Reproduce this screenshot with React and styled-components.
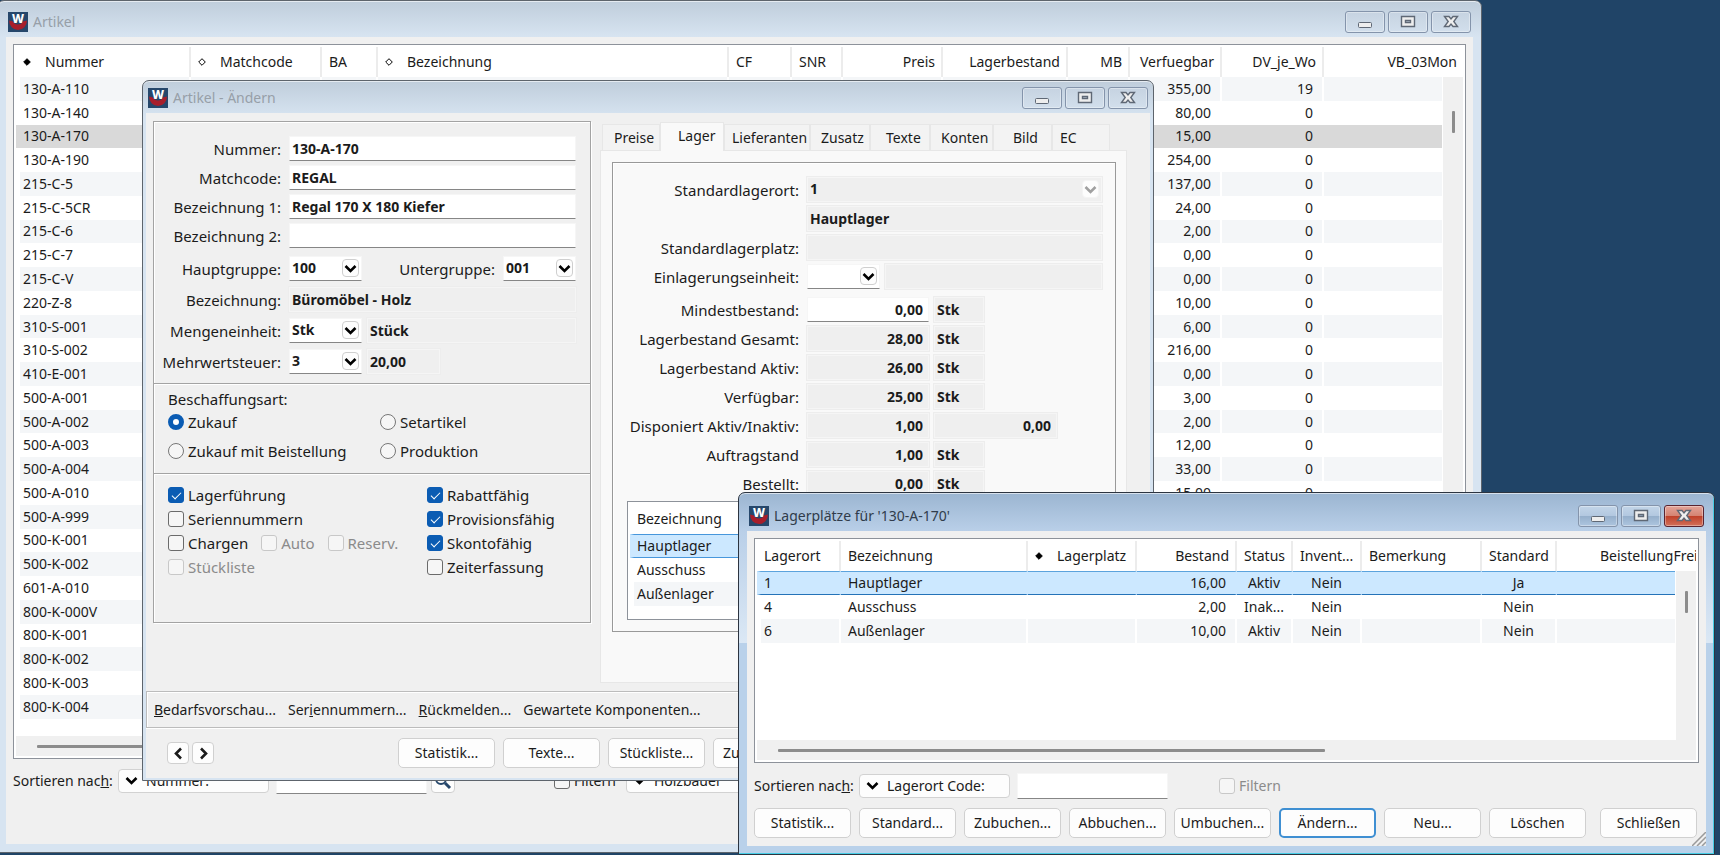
import React from 'react';
import styled, { createGlobalStyle, css } from 'styled-components';

const GlobalStyle = createGlobalStyle`
	* {
		box-sizing: border-box;
	}

	body {
		margin: 0;
		background-color: #204467;
		font-family: 'Noto Sans', 'Open Sans', sans-serif;
		font-size: 14px;
		line-height: 20px;
		color: #1b1b1b;
	}

	button,
	input,
	select {
		margin: 0;
		font-family: inherit;
		font-size: inherit;
		line-height: inherit;
		color: inherit;
	}
`;

const Desktop = styled.div`
	position: relative;
	min-height: 100vh;
	overflow: hidden;
`;

/* window frame */

const Window = styled.section`
	position: absolute;
	display: flex;
	flex-direction: column;
	padding: 0 ${({ $frame }) => $frame}px ${({ $bottom }) => $bottom}px;
	border: 1px solid ${({ $active }) => ($active ? '#2c3440' : '#5d646c')};
	border-radius: 7px 7px 0 0;
	background-color: ${({ $active }) => ($active ? '#b9d1ea' : '#d7e4f1')};
	background-image: ${({ $active }) =>
		$active
			? 'linear-gradient(#9bb5d1 0, #b9cfe8 38px, #dbe8f5 150px, #b9d1ea 150px)'
			: 'linear-gradient(#bfcddb 0, #d7e4f1 36px)'};
	box-shadow: inset 0 1px 0 rgba(255, 255, 255, 0.6)
		${({ $active }) => $active && ', inset -1px -1px 0 #45cde6'};
`;

const ArticleListWindow = styled(Window)`
	top: 0;
	bottom: 2px;
	left: -3px;
	right: 238px;
`;

const ArticleWindow = styled(Window)`
	top: 80px;
	left: 142px;
	right: 566px;
`;

const StorageWindow = styled(Window)`
	bottom: 0;
	left: 738px;
	right: 5px;
	height: 363px;
`;

const TitleBar = styled.header`
	display: flex;
	align-items: flex-end;
	height: ${({ $height }) => $height}px;
	flex-shrink: 0;
	padding: 0 2px 4px;
`;

const TitleText = styled.h1`
	flex: 1;
	margin: 0 0 0 5px;
	font-size: 14px;
	font-weight: 400;
	line-height: 22px;
	color: ${({ $active }) => ($active ? '#303c4b' : '#979fa8')};
`;

const Logo = styled.svg`
	width: 20px;
	height: 20px;
	margin-bottom: 1px;
	overflow: visible;
`;

const LogoLetter = styled.text`
	font: 800 12px 'Noto Sans', sans-serif;
	fill: #fff;
`;

const WindowButtons = styled.div`
	display: flex;
	gap: 3px;
`;

const WindowButton = styled.button`
	display: flex;
	align-items: center;
	justify-content: center;
	width: 40px;
	height: 22px;
	padding: 0;
	border: 1px solid ${({ $danger }) => ($danger ? '#5a2430' : '#8494ab')};
	border-radius: 3px;
	background: ${({ $danger, $active }) => {
		if ($danger) return 'linear-gradient(#e3a398, #d58473 48%, #bf3f28 50%, #d2705a)';
		if ($active) return 'linear-gradient(#c2d5e8, #b3c8e0 48%, #95afcb 50%, #adc5df)';
		return 'linear-gradient(#c6d3e1, #d2dfec)';
	}};
	box-shadow: inset 0 0 0 1px rgba(255, 255, 255, 0.35);
`;

const Content = styled.div`
	display: flex;
	flex: 1;
	flex-direction: column;
	min-height: 0;
	padding: 7px 7px 0;
	background-color: #f0f0f0;
`;

/* list view */

const ListFrame = styled.div`
	position: relative;
	display: flex;
	flex: 1;
	flex-direction: column;
	min-height: 0;
	padding: 2px;
	border: 1px solid #8d929a;
	background-color: #fff;
`;

const ListBody = styled.div`
	flex: 1;
	min-height: 0;
	overflow: hidden;
`;

const HeadCell = styled.th`
	height: 30px;
	padding: 0 6px 0 ${({ $indent }) => $indent || 7}px;
	border-right: 2px solid #ececec;
	font-weight: 400;
	text-align: ${({ $align }) => $align || 'left'};
	white-space: nowrap;
	overflow: hidden;

	&:last-child {
		border-right: 0;
	}
`;

const SortMark = styled.svg`
	width: 8px;
	height: 8px;
	margin-right: 14px;
	vertical-align: 1px;
`;

const Cell = styled.td`
	padding: 0 9px 0 7px;
	border-right: 2px solid #fff;
	text-align: ${({ $align }) => $align || 'left'};
	white-space: nowrap;
	overflow: hidden;

	${({ $align }) => $align === 'center' && 'padding: 0;'}

	&:first-child {
		padding-left: 3px;
		border-left: 4px solid #fff;
	}
`;

const Table = styled.table`
	width: 100%;
	height: ${({ $height }) => ($height ? `${$height}px` : 'auto')};
	table-layout: fixed;
	border-collapse: separate;
	border-spacing: 0;
	line-height: 20px;

	${Cell} {
		height: ${({ $height }) => ($height ? 23 : 24)}px;
	}
`;

const Row = styled.tr`
	background-color: ${({ $striped }) => ($striped ? '#f4f6f8' : '#fff')};

	${({ $mark }) =>
		$mark === 'inactive' &&
		css`
			background-color: #d9d9d9;

			${Cell} {
				border-color: #d9d9d9;
			}
		`}

	${({ $mark }) =>
		$mark === 'active' &&
		css`
			background-color: #cce8ff;

			${Cell} {
				border-color: #cce8ff;
				border-top: 1px solid #5ba3dd;
				border-bottom: 1px solid #2473b8;
			}
		`}
`;

const VerticalTrack = styled.div`
	position: absolute;
	top: 32px;
	right: 2px;
	bottom: 22px;
	display: flex;
	justify-content: center;
	width: 21px;
	padding-top: ${({ $offset }) => $offset}px;
	border-left: 1px solid #fff;
	background-color: #f0f0f0;
`;

const VerticalThumb = styled.div`
	width: 3px;
	height: 22px;
	border-radius: 1px;
	background-color: #8c8c8c;
`;

const HorizontalTrack = styled.div`
	display: flex;
	align-items: center;
	height: 20px;
	flex-shrink: 0;
	padding: 0 21px;
	background-color: #f0f0f0;
`;

const HorizontalThumb = styled.div`
	width: ${({ $width }) => $width};
	height: 3px;
	border-radius: 1px;
	background-color: #8c8c8c;
`;

/* form controls */

const field = css`
	width: 100%;
	height: 25px;
	padding: 0 5px 1px 2px;
	border: 1px solid #f6f6f6;
	border-radius: 0;
	outline: none;
	font-size: 14px;
	font-weight: 700;
	text-align: ${({ $align }) => $align || 'left'};
`;

const TextInput = styled.input`
	${field}
	border-bottom-color: #868686;
	background-color: #fff;
`;

const ReadOnlyInput = styled.input`
	${field}
	border-color: #f5f5f5;
	background-color: #efefef;
	box-shadow: 0 0 0 1px #ededed;
`;

const SelectWrap = styled.span`
	position: relative;
	display: block;
	width: 100%;
`;

const SelectInput = styled.select`
	${field}
	display: block;
	appearance: none;
	border-bottom-color: ${({ disabled }) => (disabled ? '#f5f5f5' : '#868686')};
	background-color: ${({ disabled }) => (disabled ? '#efefef' : '#fff')};
	box-shadow: ${({ disabled }) => (disabled ? '0 0 0 1px #ededed' : 'none')};
	opacity: 1;
`;

const SelectArrow = styled.span`
	position: absolute;
	top: 3px;
	right: 3px;
	display: flex;
	align-items: center;
	justify-content: center;
	width: 17px;
	height: 18px;
	border: 1px solid ${({ $disabled }) => ($disabled ? '#f4f4f4' : '#cfcfcf')};
	border-radius: 4px;
	background-color: #fdfdfd;
	color: ${({ $disabled }) => ($disabled ? '#a0a0a0' : '#000')};
	pointer-events: none;
`;

const SortSelectWrap = styled.span`
	position: relative;
	width: 151px;
`;

const SortSelectInput = styled.select`
	display: block;
	width: 100%;
	height: 24px;
	padding: 0 4px 0 27px;
	border: 1px solid #d2d2d2;
	border-radius: 4px;
	appearance: none;
	background-color: #fdfdfd;
`;

const SortArrow = styled.span`
	position: absolute;
	top: 0;
	left: 7px;
	display: flex;
	align-items: center;
	height: 24px;
	color: #000;
	pointer-events: none;
`;

const Button = styled.button`
	width: 97px;
	height: 30px;
	flex-shrink: 0;
	padding: 0;
	border: ${({ $primary }) => ($primary ? '2px solid #3f8fd2' : '1px solid #d0d0d0')};
	border-radius: 5px;
	background-color: #fdfdfd;
	white-space: nowrap;
`;

const StepButton = styled.button`
	display: flex;
	align-items: center;
	justify-content: center;
	width: 22px;
	height: 22px;
	padding: 0;
	border: 1px solid #d0d0d0;
	border-radius: 4px;
	background-color: #fdfdfd;
`;

const CheckLabel = styled.label`
	display: flex;
	align-items: center;
	gap: 4px;
	height: 24px;
	font-size: ${({ $small }) => ($small ? 14 : 15)}px;
	color: ${({ $disabled }) => ($disabled ? '#8b8b8b' : 'inherit')};
	white-space: nowrap;
`;

const CheckBox = styled.input`
	display: flex;
	justify-content: center;
	width: 16px;
	height: 16px;
	appearance: none;
	border: 1px solid #6b6b6b;
	border-radius: 3px;
	background-color: #f6f6f6;

	&:checked {
		border-color: #0b5cb3;
		background-color: #0b5cb3;
	}

	&:checked::after {
		content: '';
		width: 8px;
		height: 4px;
		margin-top: 4px;
		border-bottom: 1px solid #fff;
		border-left: 1px solid #fff;
		transform: rotate(-45deg);
	}

	&:disabled {
		border-color: #c8c8c8;
	}
`;

const Radio = styled.input`
	width: 16px;
	height: 16px;
	appearance: none;
	border: 1px solid #777;
	border-radius: 50%;
	background-color: #f6f6f6;

	&:checked {
		border: 5px solid #0b5cb3;
		background-color: #fff;
	}
`;

/* footers */

const ListFooter = styled.footer`
	display: flex;
	align-items: center;
	height: ${({ $height }) => $height}px;
	flex-shrink: 0;
	padding-bottom: ${({ $bottom }) => $bottom}px;
`;

const SortLabel = styled.label`
	width: 105px;
	flex-shrink: 0;
`;

const SearchInput = styled(TextInput)`
	width: 151px;
	height: 26px;
	margin-left: 7px;
	font-weight: 400;
`;

const SearchButton = styled(StepButton)`
	width: 24px;
	height: 24px;
	margin: 0 99px 0 4px;
`;

const FilterSlot = styled.div`
	margin: 0 10px 0 ${({ $gap }) => $gap}px;
`;

const StorageButtons = styled.div`
	display: flex;
	gap: 8px;
	margin-bottom: 8px;
	padding-right: 2px;
	height: 30px;
	flex-shrink: 0;

	${Button}:last-child {
		margin-left: auto;
	}
`;

const Grip = styled.svg`
	position: absolute;
	right: 8px;
	bottom: 8px;
	width: 14px;
	height: 14px;
`;

/* article form */

const ArticleContent = styled(Content)`
	padding: 8px 0 0;
`;

const Columns = styled.div`
	display: flex;
	gap: 9px;
	padding: 0 23px 0 7px;
`;

const MasterPanel = styled.form`
	width: 438px;
	flex-shrink: 0;
	align-self: flex-start;
	height: 502px;
	border: 1px solid #a3a3a3;
	box-shadow: inset 1px 1px 0 #fff, 1px 1px 0 #fff;
`;

const PanelPart = styled.fieldset`
	margin: 0;
	padding: ${({ $top }) => $top}px 14px ${({ $bottom }) => $bottom}px 0;
	border: 0;
	min-width: 0;

	& + & {
		padding-left: 14px;
		border-top: 1px solid #a3a3a3;
		box-shadow: inset 0 1px 0 #fff;
	}
`;

const FieldStack = styled.div`
	display: grid;
	gap: ${({ $gap }) => $gap || 4}px;

	& + & {
		margin-top: ${({ $offset }) => $offset}px;
	}
`;

const FieldRow = styled.div`
	display: grid;
	grid-template-columns: ${({ $columns }) => $columns};
	align-items: center;
	height: 25px;
`;

const FieldLabel = styled.label`
	padding-right: 8px;
	font-size: 15px;
	text-align: right;
	white-space: nowrap;
`;

const Legend = styled.legend`
	float: left;
	width: 100%;
	padding: 0;
	font-size: 15px;
	line-height: 22px;
`;

const ChoiceGrid = styled.div`
	display: grid;
	grid-template-columns: 212px 1fr;
	row-gap: 5px;
	clear: both;
`;

const FlagColumns = styled.div`
	display: grid;
	grid-template-columns: 259px 1fr;
`;

const FlagLine = styled.div`
	display: flex;
	gap: 13px;
`;

const TabArea = styled.div`
	flex: 1;
	min-width: 0;
`;

const TabList = styled.div`
	display: flex;
	align-items: flex-end;
	height: 29px;
	padding-left: 2px;
`;

const Tab = styled.button`
	width: ${({ $width }) => $width}px;
	height: ${({ $selected }) => ($selected ? 29 : 26)}px;
	margin-bottom: ${({ $selected }) => ($selected ? -1 : 0)}px;
	padding: 0 0 ${({ $selected }) => ($selected ? 2 : 0)}px ${({ $indent }) => $indent}px;
	border: 1px solid #e7e7e7;
	border-bottom: 0;
	background-color: ${({ $selected }) => ($selected ? '#f9f9f9' : '#f3f3f3')};
	text-align: left;
	white-space: nowrap;
	z-index: ${({ $selected }) => ($selected ? 1 : 0)};
`;

const TabPanel = styled.div`
	height: 533px;
	padding: 11px 10px 0 11px;
	border: 1px solid #e7e7e7;
	background-color: #f9f9f9;
`;

const GroupBox = styled.div`
	height: 470px;
	padding: 14px 13px 0 14px;
	border: 1px solid #999;
	box-shadow: inset 1px 1px 0 #fff;
`;

const StockList = styled(ListFrame)`
	margin-top: 5px;
	height: 119px;
	flex: none;
`;

const StockRow = styled(Row)`
	${({ $mark }) =>
		$mark &&
		css`
			${Cell} {
				border-top: 1px solid #4797dc;
				border-bottom: 1px solid #4797dc;
				border-left-color: #cce8ff;
			}
		`}
`;

const LinkBar = styled.nav`
	display: flex;
	align-items: center;
	gap: 12px;
	height: 37px;
	margin-top: 8px;
	padding-left: 7px;
	border: 1px solid #bcbcbc;
	box-shadow: inset 1px 1px 0 #fff, 0 1px 0 #fff;
`;

const ActionLink = styled.a`
	color: inherit;
	text-decoration: none;
	white-space: nowrap;
`;

const ArticleButtons = styled.div`
	display: flex;
	align-items: center;
	gap: 8px;
	height: 50px;
	padding-left: 21px;
	overflow: hidden;
`;

const Stepper = styled.div`
	display: flex;
	gap: 3px;
	width: 223px;
	flex-shrink: 0;
`;

const articles = [
	['130-A-110', '355,00', '19'],
	['130-A-140', '80,00', '0'],
	['130-A-170', '15,00', '0'],
	['130-A-190', '254,00', '0'],
	['215-C-5', '137,00', '0'],
	['215-C-5CR', '24,00', '0'],
	['215-C-6', '2,00', '0'],
	['215-C-7', '0,00', '0'],
	['215-C-V', '0,00', '0'],
	['220-Z-8', '10,00', '0'],
	['310-S-001', '6,00', '0'],
	['310-S-002', '216,00', '0'],
	['410-E-001', '0,00', '0'],
	['500-A-001', '3,00', '0'],
	['500-A-002', '2,00', '0'],
	['500-A-003', '12,00', '0'],
	['500-A-004', '33,00', '0'],
	['500-A-010', '15,00', '0'],
	['500-A-999'],
	['500-K-001'],
	['500-K-002'],
	['601-A-010'],
	['800-K-000V'],
	['800-K-001'],
	['800-K-002'],
	['800-K-003'],
	['800-K-004'],
];

const articleColumns = [
	{ title: 'Nummer', width: 175, sort: 'active' },
	{ title: 'Matchcode', width: 131, sort: 'open' },
	{ title: 'BA', width: 56 },
	{ title: 'Bezeichnung', sort: 'open' },
	{ title: 'CF', width: 63 },
	{ title: 'SNR', width: 51 },
	{ title: 'Preis', width: 100, align: 'right' },
	{ title: 'Lagerbestand', width: 125, align: 'right' },
	{ title: 'MB', width: 62, align: 'right' },
	{ title: 'Verfuegbar', width: 92, align: 'right' },
	{ title: 'DV_je_Wo', width: 102, align: 'right' },
	{ title: 'VB_03Mon', width: 139, align: 'right' },
];

const storageColumns = [
	{ title: 'Lagerort', width: 84 },
	{ title: 'Bezeichnung' },
	{ title: 'Lagerplatz', width: 109, sort: 'active' },
	{ title: 'Bestand', width: 100, align: 'right' },
	{ title: 'Status', width: 56, cellAlign: 'center' },
	{ title: 'Invent...', width: 69, cellAlign: 'center' },
	{ title: 'Bemerkung', width: 120 },
	{ title: 'Standard', width: 75, cellAlign: 'center' },
	{ title: 'BeistellungFrei', width: 139, indent: 43 },
];

const storagePlaces = [
	['1', 'Hauptlager', '', '16,00', 'Aktiv', 'Nein', '', 'Ja', ''],
	['4', 'Ausschuss', '', '2,00', 'Inak...', 'Nein', '', 'Nein', ''],
	['6', 'Außenlager', '', '10,00', 'Aktiv', 'Nein', '', 'Nein', ''],
];

const tabs = [
	{ title: 'Preise', width: 58, indent: 11 },
	{ title: 'Lager', width: 64, indent: 17, selected: true },
	{ title: 'Lieferanten', width: 86, indent: 7 },
	{ title: 'Zusatz', width: 60, indent: 10 },
	{ title: 'Texte', width: 60, indent: 15 },
	{ title: 'Konten', width: 63, indent: 10 },
	{ title: 'Bild', width: 59, indent: 19 },
	{ title: 'EC', width: 58, indent: 7 },
];

const stockFields = [
	['gesamt', 'Lagerbestand Gesamt:', '28,00'],
	['aktiv', 'Lagerbestand Aktiv:', '26,00'],
	['verfuegbar', 'Verfügbar:', '25,00'],
	['disponiert', 'Disponiert Aktiv/Inaktiv:', '1,00', '0,00'],
	['auftragstand', 'Auftragstand', '1,00'],
	['bestellt', 'Bestellt:', '0,00'],
];

const MASTER_COLUMNS = '135px 1fr';
const MASTER_SELECT_COLUMNS = '135px 73px 5px 1fr';
const STOCK_COLUMNS = '180px 122px 5px 50px';

function AppLogo() {
	return (
		<Logo viewBox="0 0 20 20" aria-hidden="true">
			<rect width="20" height="20" fill="#26476b" />
			<path d="M1 8.500a9 9.500 0 0 0 18 0l-4 1a5.500 5 0 0 1-10 0z" fill="#a81e2b" />
			<LogoLetter x="10" y="11" textAnchor="middle">
				W
			</LogoLetter>
		</Logo>
	);
}

function Chevron({ rotate = 0 }) {
	return (
		<svg width="13" height="13" viewBox="0 0 13 13" fill="none" aria-hidden="true">
			<path
				d="M1.500 4l5 5 5-5"
				stroke="currentColor"
				strokeWidth="2.600"
				transform={`rotate(${rotate} 6.500 6.500)`}
			/>
		</svg>
	);
}

function WindowTitle({ title, height, active }) {
	return (
		<TitleBar $height={height}>
			<AppLogo />
			<TitleText $active={active}>{title}</TitleText>
			<WindowButtons>
				<WindowButton $active={active} aria-label="Minimieren">
					<svg width="16" height="14" viewBox="0 0 16 14">
						<rect x="1.500" y="7.500" width="13" height="5" rx="1" fill="#eee" stroke="#5f6875" />
					</svg>
				</WindowButton>
				<WindowButton $active={active} aria-label="Maximieren">
					<svg width="16" height="14" viewBox="0 0 16 14">
						<path
							d="M1.500 1.500h13v10h-13zM5.500 5.500v2h5v-2z"
							fill="#eee"
							fillRule="evenodd"
							stroke="#5f6875"
							strokeWidth="1.400"
						/>
					</svg>
				</WindowButton>
				<WindowButton $active={active} $danger={active} aria-label="Fenster schließen">
					<svg width="16" height="14" viewBox="0 0 16 14">
						<path
							d="M1.500 1.500h4.500L8 4l2-2.500h4.500L10.800 6.500l3.700 5H10L8 9l-2 2.500H1.500l3.700-5z"
							fill="#eee"
							stroke="#5f6875"
							strokeWidth="1.400"
						/>
					</svg>
				</WindowButton>
			</WindowButtons>
		</TitleBar>
	);
}

function TableHead({ columns }) {
	return (
		<>
			<colgroup>
				{columns.map(({ title, width }) => (
					<col key={title} width={width} />
				))}
			</colgroup>
			<thead>
				<tr>
					{columns.map(({ title, sort, align, indent }) => (
						<HeadCell key={title} $align={align} $indent={indent}>
							{sort && (
								<SortMark viewBox="0 0 8 8" aria-hidden="true">
									<path
										d="M4 .7L7.300 4 4 7.300.7 4z"
										fill={sort === 'active' ? '#000' : '#fff'}
										stroke="#000"
									/>
								</SortMark>
							)}
							{title}
						</HeadCell>
					))}
				</tr>
			</thead>
		</>
	);
}

function ComboBox({ id, value, disabled, label }) {
	return (
		<SelectWrap>
			<SelectInput id={id} aria-label={label} disabled={disabled} defaultValue={value}>
				<option>{value}</option>
			</SelectInput>
			<SelectArrow $disabled={disabled}>
				<Chevron />
			</SelectArrow>
		</SelectWrap>
	);
}

function SortSelect({ id, value, label }) {
	return (
		<SortSelectWrap>
			<SortSelectInput id={id} aria-label={label} defaultValue={value}>
				<option>{value}</option>
			</SortSelectInput>
			<SortArrow>
				<Chevron />
			</SortArrow>
		</SortSelectWrap>
	);
}

function Check({ text, checked, disabled, small }) {
	return (
		<CheckLabel $disabled={disabled} $small={small}>
			<CheckBox type="checkbox" defaultChecked={checked} disabled={disabled} />
			{text}
		</CheckLabel>
	);
}

function RadioChoice({ text, checked }) {
	return (
		<CheckLabel>
			<Radio type="radio" name="beschaffungsart" defaultChecked={checked} />
			{text}
		</CheckLabel>
	);
}

function ArticleList() {
	return (
		<ArticleListWindow $frame={8} $bottom={8}>
			<WindowTitle title="Artikel" height={36} />
			<Content>
				<ListFrame>
					<ListBody>
						<Table $height={672}>
							<TableHead columns={articleColumns} />
							<tbody>
								{articles.map(([number, available, perWeek], index) => (
									<Row
										key={number}
										$striped={index % 2 === 0}
										$mark={number === '130-A-170' ? 'inactive' : undefined}
									>
										<Cell>{number}</Cell>
										<Cell />
										<Cell />
										<Cell />
										<Cell />
										<Cell />
										<Cell />
										<Cell />
										<Cell />
										<Cell $align="right">{available}</Cell>
										<Cell $align="right">{perWeek}</Cell>
										<Cell />
									</Row>
								))}
							</tbody>
						</Table>
					</ListBody>
					<VerticalTrack $offset={34}>
						<VerticalThumb />
					</VerticalTrack>
					<HorizontalTrack>
						<HorizontalThumb $width="60%" />
					</HorizontalTrack>
				</ListFrame>
				<ListFooter $height={85} $bottom={42}>
					<SortLabel htmlFor="artikel-sort">
						Sortieren nac<u>h</u>:
					</SortLabel>
					<SortSelect id="artikel-sort" value="Nummer:" />
					<SearchInput aria-label="Suchbegriff" />
					<SearchButton aria-label="Suchen">
						<svg width="18" height="18" viewBox="0 0 18 18" fill="none">
							<circle cx="7" cy="7" r="5" stroke="#26476b" strokeWidth="2" />
							<path d="M11 11l5 5" stroke="#26476b" strokeWidth="3" />
						</svg>
					</SearchButton>
					<FilterSlot $gap={0}>
						<Check text="Filtern" small />
					</FilterSlot>
					<SortSelect value="Holzbauer" label="Filter" />
				</ListFooter>
			</Content>
		</ArticleListWindow>
	);
}

function MasterData() {
	return (
		<MasterPanel>
			<PanelPart $top={14} $bottom={9}>
				<FieldStack>
					<FieldRow $columns={MASTER_COLUMNS}>
						<FieldLabel htmlFor="nummer">Nummer:</FieldLabel>
						<TextInput id="nummer" defaultValue="130-A-170" />
					</FieldRow>
					<FieldRow $columns={MASTER_COLUMNS}>
						<FieldLabel htmlFor="matchcode">Matchcode:</FieldLabel>
						<TextInput id="matchcode" defaultValue="REGAL" />
					</FieldRow>
					<FieldRow $columns={MASTER_COLUMNS}>
						<FieldLabel htmlFor="bezeichnung1">Bezeichnung 1:</FieldLabel>
						<TextInput id="bezeichnung1" defaultValue="Regal 170 X 180 Kiefer" />
					</FieldRow>
					<FieldRow $columns={MASTER_COLUMNS}>
						<FieldLabel htmlFor="bezeichnung2">Bezeichnung 2:</FieldLabel>
						<TextInput id="bezeichnung2" />
					</FieldRow>
				</FieldStack>
				<FieldStack $gap={6} $offset={5}>
					<FieldRow $columns="135px 73px 1fr 73px">
						<FieldLabel htmlFor="hauptgruppe">Hauptgruppe:</FieldLabel>
						<ComboBox id="hauptgruppe" value="100" />
						<FieldLabel htmlFor="untergruppe">Untergruppe:</FieldLabel>
						<ComboBox id="untergruppe" value="001" />
					</FieldRow>
					<FieldRow $columns={MASTER_COLUMNS}>
						<FieldLabel htmlFor="gruppe">Bezeichnung:</FieldLabel>
						<ReadOnlyInput id="gruppe" readOnly value="Büromöbel - Holz" />
					</FieldRow>
					<FieldRow $columns={MASTER_SELECT_COLUMNS}>
						<FieldLabel htmlFor="einheit">Mengeneinheit:</FieldLabel>
						<ComboBox id="einheit" value="Stk" />
						<span />
						<ReadOnlyInput aria-label="Einheit" readOnly value="Stück" />
					</FieldRow>
					<FieldRow $columns="135px 73px 5px 73px">
						<FieldLabel htmlFor="steuer">Mehrwertsteuer:</FieldLabel>
						<ComboBox id="steuer" value="3" />
						<span />
						<ReadOnlyInput aria-label="Steuersatz" readOnly value="20,00" />
					</FieldRow>
				</FieldStack>
			</PanelPart>
			<PanelPart $top={4} $bottom={10}>
				<Legend>Beschaffungsart:</Legend>
				<ChoiceGrid>
					<RadioChoice text="Zukauf" checked />
					<RadioChoice text="Setartikel" />
					<RadioChoice text="Zukauf mit Beistellung" />
					<RadioChoice text="Produktion" />
				</ChoiceGrid>
			</PanelPart>
			<PanelPart $top={9} $bottom={0}>
				<FlagColumns>
					<div>
						<Check text="Lagerführung" checked />
						<Check text="Seriennummern" />
						<FlagLine>
							<Check text="Chargen" />
							<Check text="Auto" disabled />
							<Check text="Reserv." disabled />
						</FlagLine>
						<Check text="Stückliste" disabled />
					</div>
					<div>
						<Check text="Rabattfähig" checked />
						<Check text="Provisionsfähig" checked />
						<Check text="Skontofähig" checked />
						<Check text="Zeiterfassung" />
					</div>
				</FlagColumns>
			</PanelPart>
		</MasterPanel>
	);
}

function StockTab() {
	return (
		<GroupBox>
			<FieldStack>
				<FieldRow $columns="180px 1fr">
					<FieldLabel htmlFor="lagerort">Standardlagerort:</FieldLabel>
					<ComboBox id="lagerort" value="1" disabled />
				</FieldRow>
				<FieldRow $columns="180px 1fr">
					<span />
					<ReadOnlyInput aria-label="Lagerort" readOnly value="Hauptlager" />
				</FieldRow>
				<FieldRow $columns="180px 1fr">
					<FieldLabel htmlFor="lagerplatz">Standardlagerplatz:</FieldLabel>
					<ReadOnlyInput id="lagerplatz" readOnly />
				</FieldRow>
				<FieldRow $columns="180px 73px 5px 1fr">
					<FieldLabel htmlFor="einlagerung">Einlagerungseinheit:</FieldLabel>
					<ComboBox id="einlagerung" value="" />
					<span />
					<ReadOnlyInput aria-label="Einlagerungseinheit Bezeichnung" readOnly />
				</FieldRow>
			</FieldStack>
			<FieldStack $offset={8}>
				<FieldRow $columns={STOCK_COLUMNS}>
					<FieldLabel htmlFor="mindest">Mindestbestand:</FieldLabel>
					<TextInput id="mindest" $align="right" defaultValue="0,00" />
					<span />
					<ReadOnlyInput aria-label="Einheit" readOnly value="Stk" />
				</FieldRow>
				{stockFields.map(([id, label, amount, inactive]) => (
					<FieldRow key={id} $columns={inactive ? '180px 122px 5px 123px' : STOCK_COLUMNS}>
						<FieldLabel htmlFor={id}>{label}</FieldLabel>
						<ReadOnlyInput id={id} $align="right" readOnly value={amount} />
						<span />
						<ReadOnlyInput
							aria-label={inactive ? 'Inaktiv' : 'Einheit'}
							$align={inactive ? 'right' : 'left'}
							readOnly
							value={inactive || 'Stk'}
						/>
					</FieldRow>
				))}
			</FieldStack>
			<StockList>
				<Table>
					<TableHead columns={[{ title: 'Bezeichnung' }]} />
					<tbody>
						<StockRow $mark="active">
							<Cell>Hauptlager</Cell>
						</StockRow>
						<StockRow>
							<Cell>Ausschuss</Cell>
						</StockRow>
						<StockRow $striped>
							<Cell>Außenlager</Cell>
						</StockRow>
					</tbody>
				</Table>
			</StockList>
		</GroupBox>
	);
}

function ArticleEditor() {
	return (
		<ArticleWindow $frame={3} $bottom={2}>
			<WindowTitle title="Artikel - Ändern" height={32} />
			<ArticleContent>
				<Columns>
					<MasterData />
					<TabArea>
						<TabList role="tablist">
							{tabs.map(({ title, width, indent, selected }) => (
								<Tab
									key={title}
									role="tab"
									aria-selected={!!selected}
									$width={width}
									$indent={indent}
									$selected={selected}
								>
									{title}
								</Tab>
							))}
						</TabList>
						<TabPanel role="tabpanel">
							<StockTab />
						</TabPanel>
					</TabArea>
				</Columns>
				<LinkBar>
					<ActionLink href="#bedarf">
						<u>B</u>edarfsvorschau...
					</ActionLink>
					<ActionLink href="#serien">
						Ser<u>i</u>ennummern...
					</ActionLink>
					<ActionLink href="#rueckmelden">
						<u>R</u>ückmelden...
					</ActionLink>
					<ActionLink href="#komponenten">Gewartete Komponenten...</ActionLink>
				</LinkBar>
				<ArticleButtons>
					<Stepper>
						<StepButton aria-label="Zurück">
							<Chevron rotate={90} />
						</StepButton>
						<StepButton aria-label="Weiter">
							<Chevron rotate={-90} />
						</StepButton>
					</Stepper>
					<Button>Statistik...</Button>
					<Button>Texte...</Button>
					<Button>Stückliste...</Button>
					<Button>Zubuchen...</Button>
				</ArticleButtons>
			</ArticleContent>
		</ArticleWindow>
	);
}

function StoragePlaces() {
	return (
		<StorageWindow $frame={8} $bottom={8} $active>
			<WindowTitle title="Lagerplätze für '130-A-170'" height={38} active />
			<Content>
				<ListFrame>
					<ListBody>
						<Table>
							<TableHead columns={storageColumns} />
							<tbody>
								{storagePlaces.map((place, index) => (
									<Row
										key={place[0]}
										$striped={index === 2}
										$mark={index === 0 ? 'active' : undefined}
									>
										{storageColumns.map(({ title, align, cellAlign }, column) => (
											<Cell key={title} $align={cellAlign || align}>
												{place[column]}
											</Cell>
										))}
									</Row>
								))}
							</tbody>
						</Table>
					</ListBody>
					<VerticalTrack $offset={20}>
						<VerticalThumb />
					</VerticalTrack>
					<HorizontalTrack>
						<HorizontalThumb $width="61%" />
					</HorizontalTrack>
				</ListFrame>
				<ListFooter $height={45} $bottom={0}>
					<SortLabel htmlFor="lager-sort">
						Sortieren nac<u>h</u>:
					</SortLabel>
					<SortSelect id="lager-sort" value="Lagerort Code:" />
					<SearchInput aria-label="Suchbegriff Lagerplatz" />
					<FilterSlot $gap={51}>
						<Check text="Filtern" disabled small />
					</FilterSlot>
				</ListFooter>
				<StorageButtons>
					<Button>Statistik...</Button>
					<Button>Standard...</Button>
					<Button>Zubuchen...</Button>
					<Button>Abbuchen...</Button>
					<Button>Umbuchen...</Button>
					<Button $primary>Ändern...</Button>
					<Button>Neu...</Button>
					<Button>Löschen</Button>
					<Button>Schließen</Button>
				</StorageButtons>
			</Content>
			<Grip viewBox="0 0 14 14" aria-hidden="true">
				<path d="M0 14L14 0M5 14l9-9M10 14l4-4" stroke="#9a9a9a" strokeWidth="1.500" />
			</Grip>
		</StorageWindow>
	);
}

export default function App() {
	return (
		<>
			<GlobalStyle />
			<Desktop>
				<ArticleList />
				<ArticleEditor />
				<StoragePlaces />
			</Desktop>
		</>
	);
}
